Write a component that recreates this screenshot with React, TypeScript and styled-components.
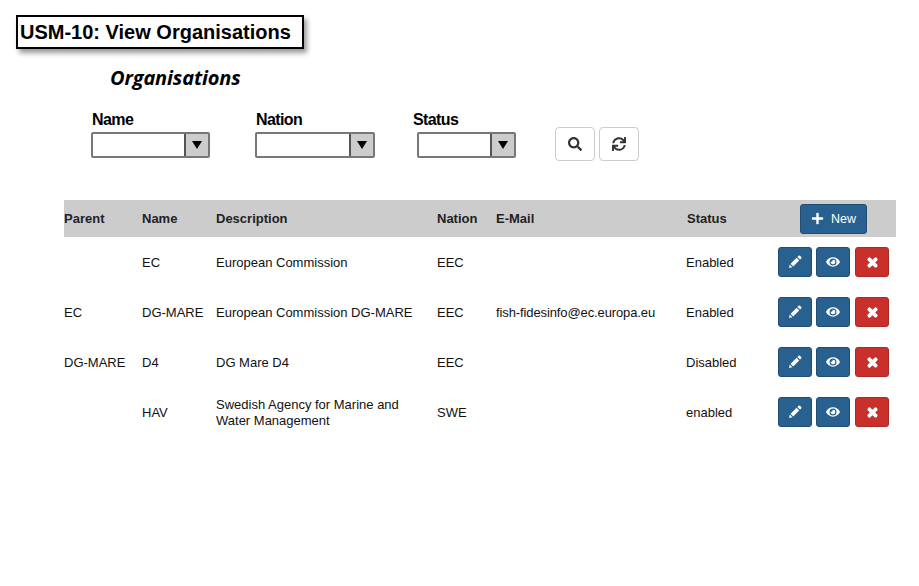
import styled, { createGlobalStyle } from 'styled-components';
import { FaSearch, FaSync, FaEye, FaTimes, FaPlus } from 'react-icons/fa';

const GlobalStyle = createGlobalStyle`
  html, body {
    margin: 0;
    background: #fff;
  }
  body {
    font-family: 'Liberation Sans', Arial, sans-serif;
    color: #111;
  }
`;

const Page = styled.div`
  width: 919px;
  height: 586px;
  overflow: hidden;
  padding: 15px 23px 0 16px;
  box-sizing: border-box;
`;

const Banner = styled.h1`
  display: block;
  width: 288px;
  height: 34px;
  margin: 0;
  box-sizing: border-box;
  border: 2px solid #000;
  padding: 0 0 0 2px;
  background: #fff;
  box-shadow: 3px 4px 5px rgba(0, 0, 0, 0.4);
  font-size: 20px;
  line-height: 30px;
  font-weight: 700;
  color: #000;
  white-space: nowrap;
`;

const Heading = styled.h2`
  margin: 15px 0 0 94px;
  font-family: 'Comic Sans MS', 'Open Sans', cursive;
  font-size: 20px;
  line-height: 28px;
  font-style: italic;
  font-weight: 700;
  letter-spacing: -0.15px;
  color: #000;
`;

const Filters = styled.div`
  display: flex;
  align-items: flex-start;
  margin: 14px 0 0 75px;
  height: 94px;
`;

const Filter = styled.div<{ $width: number; $offset: number }>`
  width: ${(p) => p.$width}px;
  margin-right: ${(p) => p.$offset}px;
  padding-top: 5px;
`;

const FilterLabel = styled.label<{ $shift?: number }>`
  display: block;
  margin-left: ${(p) => p.$shift ?? 1}px;
  font-size: 16px;
  line-height: 18px;
  font-weight: 700;
  letter-spacing: -0.6px;
  color: #000;
`;

const SelectBox = styled.div`
  display: flex;
  justify-content: flex-end;
  height: 26px;
  margin-top: 3px;
  box-sizing: border-box;
  border: 2px solid #777;
  border-radius: 2px;
  background: #fff;
`;

const SelectArrow = styled.span`
  display: flex;
  align-items: center;
  justify-content: center;
  width: 22px;
  background: #ccc;
  border-left: 2px solid #555;
  &::before {
    content: '';
    border-left: 5px solid transparent;
    border-right: 5px solid transparent;
    border-top: 8px solid #000;
  }
`;

const SearchActions = styled.div`
  display: flex;
  gap: 4px;
  margin-top: 21px;
`;

const ToolButton = styled.button`
  display: flex;
  align-items: center;
  justify-content: center;
  width: 40px;
  height: 34px;
  padding: 0;
  background: #fff;
  border: 1px solid #ccc;
  border-radius: 4px;
  color: #333;
  font-size: 14px;
`;

const Table = styled.table`
  width: 832px;
  margin: 0 0 0 48px;
  border-collapse: collapse;
  table-layout: fixed;
  font-size: 13px;
  color: #111;
`;

const HeadRow = styled.tr`
  background: #ccc;
  height: 37px;
`;

const HeadCell = styled.th<{ $width?: number }>`
  width: ${(p) => (p.$width ? `${p.$width}px` : 'auto')};
  padding: 0;
  text-align: left;
  font-size: 13px;
  font-weight: 700;
  color: #222;
`;

const StatusHead = styled.span`
  margin-left: 1px;
`;

const Row = styled.tr`
  height: 50px;
`;

const Cell = styled.td`
  padding: 2px 0 0;
  line-height: 16px;
  vertical-align: middle;
`;

const DescriptionCell = styled(Cell)`
  padding-right: 16px;
`;

const EmailCell = styled(Cell)`
  letter-spacing: -0.11px;
`;

const ActionCell = styled.td`
  padding: 0;
  vertical-align: middle;
`;

const ActionsHead = styled.div`
  display: flex;
  justify-content: flex-start;
  padding-left: 22px;
`;

const NewButton = styled.button`
  display: flex;
  align-items: center;
  justify-content: center;
  gap: 7px;
  width: 67px;
  height: 30px;
  padding: 0;
  background: #286090;
  border: 1px solid #204d74;
  border-radius: 3px;
  color: #fff;
  font-family: inherit;
  font-size: 12.5px;
  font-weight: 400;
  svg {
    font-size: 13px;
  }
`;

const ActionGroup = styled.div`
  display: flex;
  gap: 4px;
`;

const RowButton = styled.button<{ $danger?: boolean }>`
  display: flex;
  align-items: center;
  justify-content: center;
  width: 34px;
  height: 30px;
  margin-left: ${(p) => (p.$danger ? '1px' : '0')};
  padding: 0;
  background: ${(p) => (p.$danger ? '#c9302c' : '#286090')};
  border: 1px solid ${(p) => (p.$danger ? '#ac2925' : '#204d74')};
  border-radius: 3px;
  color: #fff;
  font-size: 14px;
`;

const ThickTimes = styled(FaTimes)`
  font-size: 13px;
  stroke: #fff;
  stroke-width: 50px;
`;

const PencilIcon = () => (
  <svg width="14" height="14" viewBox="0 0 14 14" fill="#fff">
    <path d="M1 13 L1.8 9.6 L4.4 12.2 Z" />
    <path d="M2.6 8.8 L8.6 2.8 L11.2 5.4 L5.2 11.4 Z" />
    <path d="M9.4 2 L10.6 .8 a1 1 0 0 1 1.4 0 L13.2 2 a1 1 0 0 1 0 1.4 L12 4.6 Z" />
  </svg>
);

const rows = [
  { parent: '', name: 'EC', description: 'European Commission', nation: 'EEC', email: '', status: 'Enabled' },
  { parent: 'EC', name: 'DG-MARE', description: 'European Commission DG-MARE', nation: 'EEC', email: 'fish-fidesinfo@ec.europa.eu', status: 'Enabled' },
  { parent: 'DG-MARE', name: 'D4', description: 'DG Mare D4', nation: 'EEC', email: '', status: 'Disabled' },
  { parent: '', name: 'HAV', description: 'Swedish Agency for Marine and Water Management', nation: 'SWE', email: '', status: 'enabled' },
];

export default function App() {
  return (
    <Page>
      <GlobalStyle />
      <Banner>USM-10: View Organisations</Banner>
      <Heading>Organisations</Heading>
      <Filters>
        <Filter $width={119} $offset={45}>
          <FilterLabel>Name</FilterLabel>
          <SelectBox><SelectArrow /></SelectBox>
        </Filter>
        <Filter $width={120} $offset={42}>
          <FilterLabel>Nation</FilterLabel>
          <SelectBox><SelectArrow /></SelectBox>
        </Filter>
        <Filter $width={99} $offset={39}>
          <FilterLabel $shift={-4}>Status</FilterLabel>
          <SelectBox><SelectArrow /></SelectBox>
        </Filter>
        <SearchActions>
          <ToolButton><FaSearch /></ToolButton>
          <ToolButton><FaSync /></ToolButton>
        </SearchActions>
      </Filters>
      <Table>
        <thead>
          <HeadRow>
            <HeadCell $width={78}>Parent</HeadCell>
            <HeadCell $width={74}>Name</HeadCell>
            <HeadCell $width={221}>Description</HeadCell>
            <HeadCell $width={59}>Nation</HeadCell>
            <HeadCell $width={190}>E-Mail</HeadCell>
            <HeadCell $width={92}><StatusHead>Status</StatusHead></HeadCell>
            <HeadCell>
              <ActionsHead>
                <NewButton><FaPlus /> New</NewButton>
              </ActionsHead>
            </HeadCell>
          </HeadRow>
        </thead>
        <tbody>
          {rows.map((r) => (
            <Row key={r.name}>
              <Cell>{r.parent}</Cell>
              <Cell>{r.name}</Cell>
              <DescriptionCell>{r.description}</DescriptionCell>
              <Cell>{r.nation}</Cell>
              <EmailCell>{r.email}</EmailCell>
              <Cell>{r.status}</Cell>
              <ActionCell>
                <ActionGroup>
                  <RowButton><PencilIcon /></RowButton>
                  <RowButton><FaEye /></RowButton>
                  <RowButton $danger><ThickTimes /></RowButton>
                </ActionGroup>
              </ActionCell>
            </Row>
          ))}
        </tbody>
      </Table>
    </Page>
  );
}
